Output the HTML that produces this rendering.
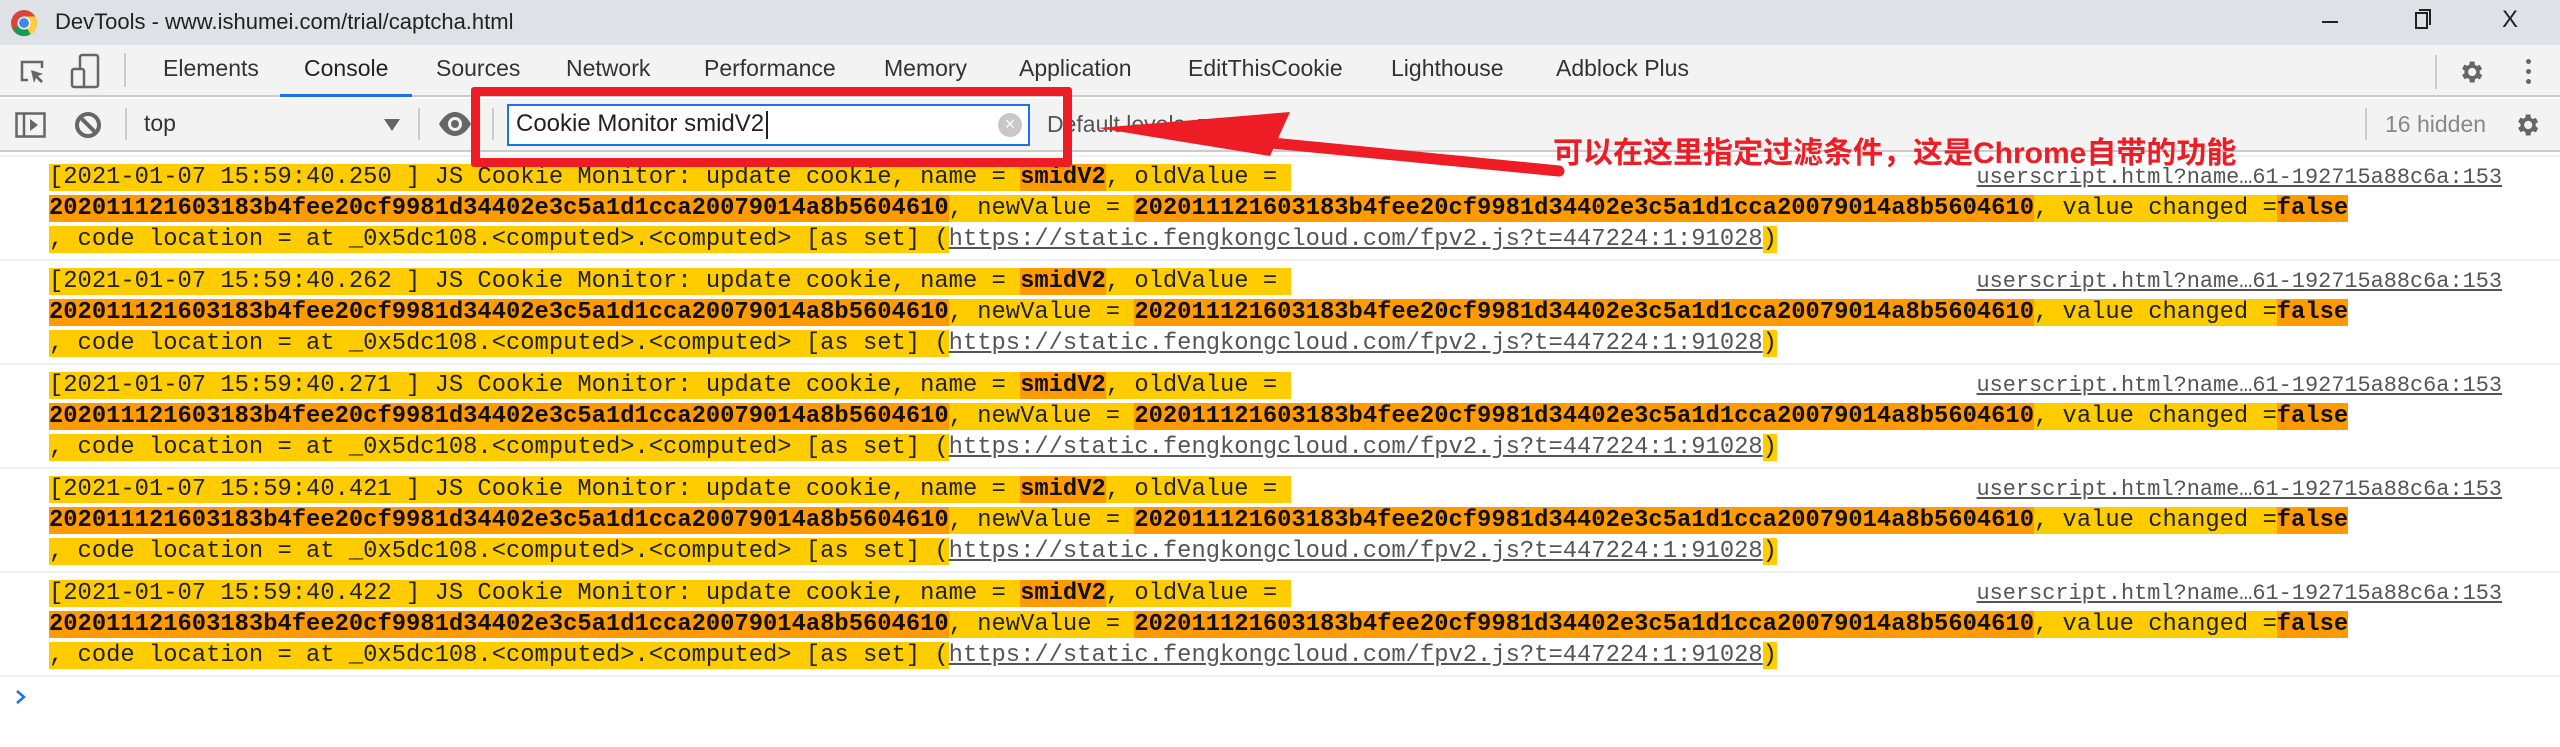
<!DOCTYPE html>
<html><head><meta charset="utf-8"><style>
*{margin:0;padding:0;box-sizing:border-box}
body{width:2560px;height:747px;overflow:hidden;background:#fff;position:relative;font-family:"Liberation Sans","Noto Sans CJK SC",sans-serif}
.abs{position:absolute}
#title{left:0;top:0;width:2560px;height:45px;background:#dee1e6}
#tabs{left:0;top:45px;width:2560px;height:52px;background:#f3f3f3;border-bottom:2px solid #cbcbcb}
.tab{position:absolute;top:10px;font-size:23px;color:#333}
#tb{left:0;top:99px;width:2560px;height:53px;background:#f3f3f3;border-bottom:2px solid #cbcbcb}
.sep{position:absolute;width:2px;background:#ccc}
.row{position:absolute;left:0;width:2560px;height:104px;border-top:2px solid #efefef}
.ln{position:absolute;left:49px;font-family:"Liberation Mono",monospace;font-size:23.8px;line-height:31px;height:31px;white-space:pre;color:#222}
.y{background:#ffcc00}.o{background:#ff9a00;font-weight:bold;color:#111}
.u{text-decoration:underline;color:#555}
.lnk{position:absolute;right:58px;top:5px;font-family:"Liberation Mono",monospace;font-size:21.9px;line-height:31px;color:#555;text-decoration:underline;white-space:pre}
</style></head><body>
<div id="title" class="abs">
 <svg class="abs" style="left:10px;top:9px" width="28" height="28" viewBox="0 0 28 28"><circle cx="14" cy="14" r="13" fill="#db4437"/><path d="M14 14 L2.7 20.5 A13 13 0 0 0 20.5 25.3Z" fill="#0f9d58"/><path d="M14 14 L20.5 25.3 A13 13 0 0 0 25.3 7.5 L14 7.5Z" fill="#ffcd40"/><circle cx="14" cy="14" r="6.5" fill="#fff"/><circle cx="14" cy="14" r="5" fill="#4285f4"/></svg>
 <div class="abs" style="left:55px;top:9px;font-size:22px;color:#222">DevTools - www.ishumei.com/trial/captcha.html</div>
 <div class="abs" style="left:2322px;top:21px;width:16px;height:2px;background:#222"></div>
 <div class="abs" style="left:2415px;top:12px;width:13px;height:17px;border:2px solid #222"></div>
 <div class="abs" style="left:2419px;top:9px;width:12px;height:16px;border-top:2px solid #222;border-right:2px solid #222"></div>
 <div class="abs" style="left:2502px;top:6px;font-size:24px;color:#222">X</div>
</div>
<div id="tabs" class="abs">
 <svg class="abs" style="left:18px;top:13px" width="30" height="30" viewBox="0 0 30 30"><path d="M10 22H4V4h20v6" fill="none" stroke="#666" stroke-width="2.5"/><path d="M13 12l12 4-5 2 5 5-2 2-5-5-2 5z" fill="#666"/></svg>
 <svg class="abs" style="left:70px;top:8px" width="32" height="36" viewBox="0 0 32 36"><rect x="10" y="2" width="18" height="32" rx="2" fill="none" stroke="#666" stroke-width="2.5"/><rect x="2" y="16" width="12" height="18" rx="2" fill="#f3f3f3" stroke="#666" stroke-width="2.5"/></svg>
 <div class="sep" style="left:124px;top:8px;height:34px"></div>
 <div class="tab" style="left:163px">Elements</div>
 <div class="tab" style="left:304px;color:#222">Console</div>
 <div class="abs" style="left:280px;top:49px;width:132px;height:3px;background:#1a73e8"></div>
 <div class="tab" style="left:436px">Sources</div>
 <div class="tab" style="left:566px">Network</div>
 <div class="tab" style="left:704px">Performance</div>
 <div class="tab" style="left:884px">Memory</div>
 <div class="tab" style="left:1019px">Application</div>
 <div class="tab" style="left:1188px">EditThisCookie</div>
 <div class="tab" style="left:1391px">Lighthouse</div>
 <div class="tab" style="left:1556px">Adblock Plus</div>
 <div class="sep" style="left:2435px;top:10px;height:34px"></div>
 <svg class="abs" style="left:2457px;top:13px" width="28" height="28" viewBox="0 0 24 24"><path fill="#666" d="M19.4 13a7.5 7.5 0 0 0 0-2l2.1-1.6-2-3.5-2.5 1a7 7 0 0 0-1.7-1L15 3h-4l-.4 2.7a7 7 0 0 0-1.7 1l-2.5-1-2 3.5L6.5 11a7.5 7.5 0 0 0 0 2l-2.1 1.6 2 3.5 2.5-1a7 7 0 0 0 1.7 1L11 21h4l.4-2.7a7 7 0 0 0 1.7-1l2.5 1 2-3.5zM13 15.5a3.5 3.5 0 1 1 0-7 3.5 3.5 0 0 1 0 7z"/></svg>
 <div class="abs" style="left:2526px;top:14px;width:5px;height:5px;border-radius:3px;background:#666;box-shadow:0 10px #666,0 20px #666"></div>
</div>
<div id="tb" class="abs">
 <svg class="abs" style="left:15px;top:13px" width="32" height="26" viewBox="0 0 32 26"><rect x="1.5" y="1.5" width="28" height="23" fill="none" stroke="#666" stroke-width="2.5"/><line x1="9" y1="2" x2="9" y2="24" stroke="#666" stroke-width="2.5"/><path d="M15 7l8 6-8 6z" fill="#666"/></svg>
 <svg class="abs" style="left:74px;top:12px" width="28" height="28" viewBox="0 0 28 28"><circle cx="14" cy="14" r="11" fill="none" stroke="#666" stroke-width="4"/><line x1="7" y1="7" x2="21" y2="21" stroke="#666" stroke-width="4"/></svg>
 <div class="sep" style="left:125px;top:9px;height:32px"></div>
 <div class="abs" style="left:144px;top:11px;font-size:23px;color:#333">top</div>
 <div class="abs" style="left:384px;top:20px;border-left:8px solid transparent;border-right:8px solid transparent;border-top:12px solid #666"></div>
 <div class="sep" style="left:418px;top:9px;height:32px"></div>
 <svg class="abs" style="left:438px;top:12px" width="34" height="26" viewBox="0 0 34 26"><path d="M1 13C6 4 12 1 17 1s11 3 16 12c-5 9-11 12-16 12S6 22 1 13z" fill="#666"/><circle cx="17" cy="13" r="7" fill="#f3f3f3"/><circle cx="17" cy="13" r="4" fill="#666"/></svg>
 <div class="sep" style="left:492px;top:9px;height:32px"></div>
 <div class="abs" style="left:507px;top:5px;width:523px;height:42px;background:#fff;border:2px solid #1a73e8"></div>
 <div class="abs" style="left:516px;top:11px;font-size:24px;color:#222">Cookie Monitor smidV2</div>
 <div class="abs" style="left:766px;top:12px;width:2px;height:28px;background:#222"></div>
 <div class="abs" style="left:998px;top:14px;width:24px;height:24px;border-radius:12px;background:#c8c8c8;color:#fff;font-size:18px;line-height:23px;text-align:center">×</div>
 <div class="abs" style="left:1047px;top:12px;font-size:23px;color:#555">Default levels</div>
 <div class="abs" style="left:1198px;top:20px;border-left:6px solid transparent;border-right:6px solid transparent;border-top:10px solid #555"></div>
 <div class="sep" style="left:2365px;top:9px;height:32px"></div>
 <div class="abs" style="left:2385px;top:12px;font-size:23px;color:#888">16 hidden</div>
 <svg class="abs" style="left:2513px;top:12px" width="28" height="28" viewBox="0 0 24 24"><path fill="#666" d="M19.4 13a7.5 7.5 0 0 0 0-2l2.1-1.6-2-3.5-2.5 1a7 7 0 0 0-1.7-1L15 3h-4l-.4 2.7a7 7 0 0 0-1.7 1l-2.5-1-2 3.5L6.5 11a7.5 7.5 0 0 0 0 2l-2.1 1.6 2 3.5 2.5-1a7 7 0 0 0 1.7 1L11 21h4l.4-2.7a7 7 0 0 0 1.7-1l2.5 1 2-3.5zM13 15.5a3.5 3.5 0 1 1 0-7 3.5 3.5 0 0 1 0 7z"/></svg>
</div>

<div class="row" style="top:155px"><div class="lnk">userscript.html?name…61-192715a88c6a:153</div><div class="ln" style="top:5px"><span class="y">[2021-01-07 15:59:40.250 ] JS Cookie Monitor: update cookie, name = </span><span class="o">smidV2</span><span class="y">, oldValue = </span></div><div class="ln" style="top:36px"><span class="o">202011121603183b4fee20cf9981d34402e3c5a1d1cca20079014a8b5604610</span><span class="y">, newValue = </span><span class="o">202011121603183b4fee20cf9981d34402e3c5a1d1cca20079014a8b5604610</span><span class="y">, value changed =</span><span class="o">false</span></div><div class="ln" style="top:67px"><span class="y">, code location = at _0x5dc108.&lt;computed&gt;.&lt;computed&gt; [as set] (</span><span class="u">https://static.fengkongcloud.com/fpv2.js?t=447224:1:91028</span><span class="y">)</span></div></div>
<div class="row" style="top:259px"><div class="lnk">userscript.html?name…61-192715a88c6a:153</div><div class="ln" style="top:5px"><span class="y">[2021-01-07 15:59:40.262 ] JS Cookie Monitor: update cookie, name = </span><span class="o">smidV2</span><span class="y">, oldValue = </span></div><div class="ln" style="top:36px"><span class="o">202011121603183b4fee20cf9981d34402e3c5a1d1cca20079014a8b5604610</span><span class="y">, newValue = </span><span class="o">202011121603183b4fee20cf9981d34402e3c5a1d1cca20079014a8b5604610</span><span class="y">, value changed =</span><span class="o">false</span></div><div class="ln" style="top:67px"><span class="y">, code location = at _0x5dc108.&lt;computed&gt;.&lt;computed&gt; [as set] (</span><span class="u">https://static.fengkongcloud.com/fpv2.js?t=447224:1:91028</span><span class="y">)</span></div></div>
<div class="row" style="top:363px"><div class="lnk">userscript.html?name…61-192715a88c6a:153</div><div class="ln" style="top:5px"><span class="y">[2021-01-07 15:59:40.271 ] JS Cookie Monitor: update cookie, name = </span><span class="o">smidV2</span><span class="y">, oldValue = </span></div><div class="ln" style="top:36px"><span class="o">202011121603183b4fee20cf9981d34402e3c5a1d1cca20079014a8b5604610</span><span class="y">, newValue = </span><span class="o">202011121603183b4fee20cf9981d34402e3c5a1d1cca20079014a8b5604610</span><span class="y">, value changed =</span><span class="o">false</span></div><div class="ln" style="top:67px"><span class="y">, code location = at _0x5dc108.&lt;computed&gt;.&lt;computed&gt; [as set] (</span><span class="u">https://static.fengkongcloud.com/fpv2.js?t=447224:1:91028</span><span class="y">)</span></div></div>
<div class="row" style="top:467px"><div class="lnk">userscript.html?name…61-192715a88c6a:153</div><div class="ln" style="top:5px"><span class="y">[2021-01-07 15:59:40.421 ] JS Cookie Monitor: update cookie, name = </span><span class="o">smidV2</span><span class="y">, oldValue = </span></div><div class="ln" style="top:36px"><span class="o">202011121603183b4fee20cf9981d34402e3c5a1d1cca20079014a8b5604610</span><span class="y">, newValue = </span><span class="o">202011121603183b4fee20cf9981d34402e3c5a1d1cca20079014a8b5604610</span><span class="y">, value changed =</span><span class="o">false</span></div><div class="ln" style="top:67px"><span class="y">, code location = at _0x5dc108.&lt;computed&gt;.&lt;computed&gt; [as set] (</span><span class="u">https://static.fengkongcloud.com/fpv2.js?t=447224:1:91028</span><span class="y">)</span></div></div>
<div class="row" style="top:571px"><div class="lnk">userscript.html?name…61-192715a88c6a:153</div><div class="ln" style="top:5px"><span class="y">[2021-01-07 15:59:40.422 ] JS Cookie Monitor: update cookie, name = </span><span class="o">smidV2</span><span class="y">, oldValue = </span></div><div class="ln" style="top:36px"><span class="o">202011121603183b4fee20cf9981d34402e3c5a1d1cca20079014a8b5604610</span><span class="y">, newValue = </span><span class="o">202011121603183b4fee20cf9981d34402e3c5a1d1cca20079014a8b5604610</span><span class="y">, value changed =</span><span class="o">false</span></div><div class="ln" style="top:67px"><span class="y">, code location = at _0x5dc108.&lt;computed&gt;.&lt;computed&gt; [as set] (</span><span class="u">https://static.fengkongcloud.com/fpv2.js?t=447224:1:91028</span><span class="y">)</span></div></div>
<div class="abs" style="left:0;top:675px;width:2560px;height:2px;background:#efefef"></div>
<svg class="abs" style="left:14px;top:688px" width="14" height="18" viewBox="0 0 14 18"><path d="M3 3l7 6-7 6" fill="none" stroke="#1a73e8" stroke-width="2.5"/></svg>

<div class="abs" style="left:471px;top:87px;width:601px;height:80px;border:9px solid #ee1c25;border-radius:3px"></div>
<svg class="abs" style="left:0;top:0" width="2560" height="747"><line x1="1559" y1="171" x2="1200" y2="136" stroke="#ee1c25" stroke-width="11" stroke-linecap="round"/><path d="M1098 128L1290 112 1270 156Z" fill="#ee1c25"/></svg>
<div class="abs" style="left:1553px;top:128px;font-size:30px;font-weight:bold;color:#ee1c25;white-space:nowrap;font-family:'Liberation Sans','Noto Sans CJK SC',sans-serif">可以在这里指定过滤条件，这是Chrome自带的功能</div>
</body></html>
